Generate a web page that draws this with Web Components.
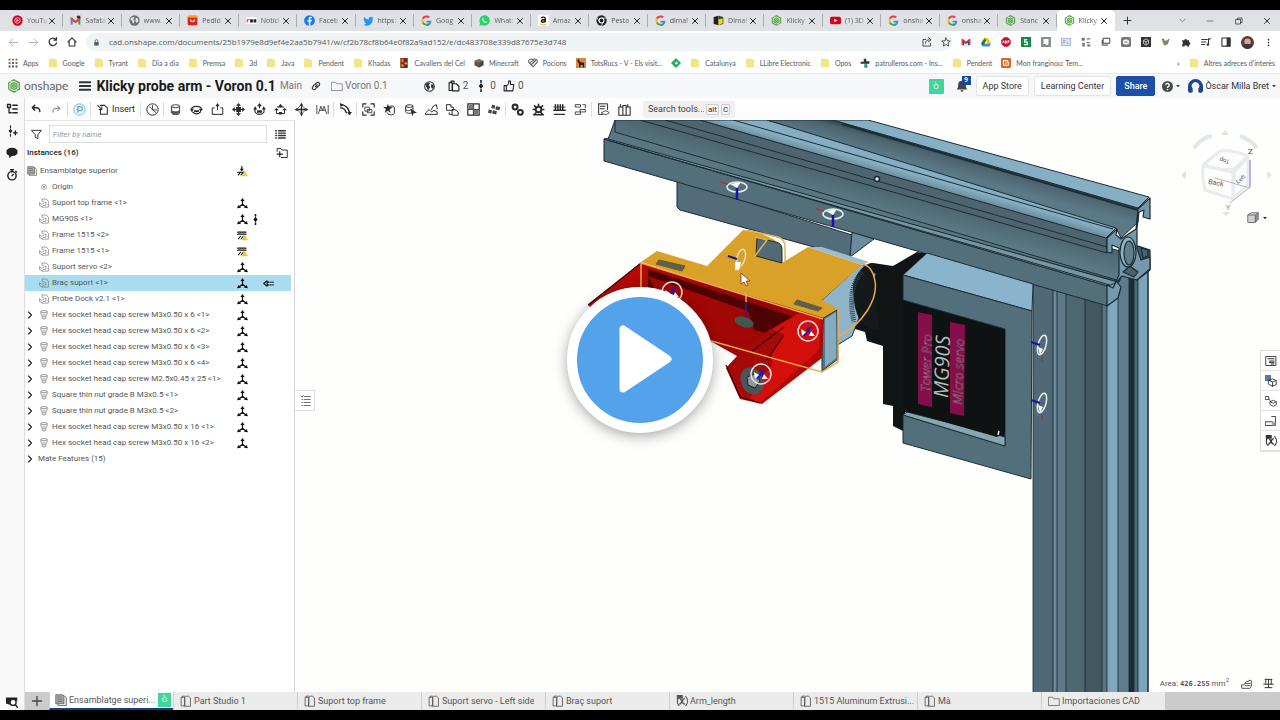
<!DOCTYPE html>
<html lang="ca">
<head>
<meta charset="utf-8">
<title>Klicky probe arm - Voron 0.1</title>
<style>
  * { box-sizing: border-box; }
  html { height: 100%; }
  body {
    margin: 0;
    min-height: 100%;
    padding: 10px 0;
    background: #000;
    position: relative;
    display: flex;
    flex-direction: column;
    font-family: Roboto, "Open Sans", sans-serif;
    font-size: 8px;
    line-height: 12px;
    color: #333;
  }
</style>
</head>
<body>
<browser-chrome></browser-chrome>
<doc-header></doc-header>
<cad-workspace></cad-workspace>
<play-button></play-button>

<script>
/** 16x16 icon bodies. Strokes use currentColor unless they are brand marks. */
const G = '<path fill="#4285f4" d="M15 8.2H8v2.7h4c-.4 1.5-1.900 2.600-4 2.600V16c4 0 7-2.800 7-7.800"/><path fill="#34a853" d="M1.500 11.500A7.500 7.500 0 0 0 12.500 14l-2-1.900a4.600 4.600 0 0 1-6.800-2.300z"/><path fill="#fbbc05" d="M1.500 4.500a8 8 0 0 0 0 7l2.300-1.800a5 5 0 0 1 0-3.500z"/><path fill="#ea4335" d="M1.500 4.500A7.500 7.500 0 0 1 13 2.500l-2 2a4.700 4.700 0 0 0-7.200 1.700z"/>';
const line = (d, w = 1.4) => `<path fill="none" stroke="currentColor" stroke-width="${w}" stroke-linecap="round" stroke-linejoin="round" d="${d}"/>`;
const fill = (d) => `<path fill="currentColor" d="${d}"/>`;
const LOGO = '<g fill="none" stroke="#58a745" stroke-width="1.600"><path d="M5 2.500L8 1l6 3.500v7L11 13.300"/><path d="M2 11.500v-7L4 3.300M2 11.500L8 15l2.500-1.500"/><path d="M8 4.200L11.300 6v4L8 11.800 4.700 10V6z"/><circle cx="8" cy="8" r="1.500"/></g>';

const ICONS = {
  yt: '<circle cx="8" cy="8" r="7.500" fill="#d6001c"/><circle cx="8" cy="8" r="4" fill="none" stroke="#fff"/><path fill="#fff" d="M6.500 5.700v4.600L10.300 8z"/>',
  gmail: '<path fill="#4285f4" d="M1 4h3v10H1z"/><path fill="#34a853" d="M12 4h3v10h-3z"/><path fill="#ea4335" d="M1 3l7 5 7-5v4l-7 5-7-5z"/><path fill="#333" d="M10 1h5v4h-5z"/>',
  web: '<circle cx="8" cy="8" r="7.500" fill="#6b6f73"/><path fill="#dfe1e5" d="M3 4.500l4-2 1 2-2 2 2 2-1 4-2-1V9L2 7zm7-1l3 2 .5 4-2.500 2-2-3z"/>',
  ali: '<rect x="1" y="1" width="14" height="14" rx="2" fill="#d9241b"/><path fill="#ff9f1a" d="M1 3a2 2 0 0 1 2-2h10a2 2 0 0 1 2 2v1H1z"/><path d="M5 6a3 3.500 0 0 0 6 0" fill="none" stroke="#fff" stroke-width="1.500"/>',
  f24: '<rect y="3" width="16" height="10" fill="#fff"/><path fill="#d22" d="M1 6h4v1.500H2.500V11H1z"/><path fill="#222" d="M6 6h4v5H6zM11 6h4v5h-4z"/>',
  fb: '<circle cx="8" cy="8" r="7.800" fill="#1877f2"/><path fill="#fff" d="M7 15.800V9.500H5V7.300h2V5.500C7 3.600 8.200 2.700 9.800 2.700l1.600.1v2h-1.100c-.9 0-1.100.5-1.100 1.100v1.400h2.200l-.4 2.200H9.200v6.300z"/>',
  tw: '<path fill="#1d9bf0" d="M15.500 3.500l-1.600.5a3.200 3.200 0 0 0-5.700 2.500A9 9 0 0 1 1.500 3a3.200 3.200 0 0 0 1 4.400L1 7a3.300 3.300 0 0 0 2.600 3.200l-1.400.1a3.200 3.200 0 0 0 3 2.200A6.500 6.500 0 0 1 .5 14c7 4 13.500-.5 13.500-8z"/>',
  google: G,
  wa: '<path fill="#25d366" d="M8 .5a7.500 7.500 0 1 1-3.700 14L.5 15.500l1.100-3.700A7.500 7.500 0 0 1 8 .5"/><path fill="#fff" d="M5.500 4.300L4.600 6c.4 3 2.600 5 5.600 5.700l1.600-1.200-1.900-1.600-1 .9C7.600 9.300 6.800 8.300 6.400 7.200l.8-.9z"/>',
  amazon: '<rect width="16" height="16" rx="1" fill="#fff"/><path fill="none" stroke="#111" stroke-width="2" d="M5 4.500C6 2.500 10.500 2.500 10.500 5v5.500M10.500 6.500C7 6.500 5 7.200 5 9s4 2.300 5.500-.5"/><path fill="none" stroke="#f90" stroke-width="1.300" d="M3 13c3.500 2 7 2 10 0"/>',
  chrome: '<circle cx="8" cy="8" r="7.500" fill="#222"/><circle cx="8" cy="8" r="3.500" fill="#222" stroke="#fff" stroke-width="1.500"/><path stroke="#fff" d="M8 4.500h7M5 9.500L1.500 4M11 10l-3.500 6"/>',
  dimaf: '<path fill="#222" d="M1 3l7-2v14l-7-2z"/><path fill="#3a4a22" d="M8 1l7 2v10l-7 2z"/><path fill="#e9d91f" d="M8 6l6-1v7l-6 3z"/>',
  onshape: LOGO,
  ytr: '<rect y="2.500" width="16" height="11" rx="2.500" fill="#d6001c"/><path fill="#fff" d="M6.300 5.500v5L10.800 8z"/>',
  close: line('M3 3l10 10M13 3L3 13', 2),
  plus: line('M8 2v12M2 8h12', 1.800),
  min: line('M2 8h12', 1.200),
  restore: line('M2 5h9v9H2zM5 5V2h9v9h-3', 1.500),
  chevd: line('M2 5l6 6 6-6', 1.200),
  back: line('M14 8H2M7 3L2 8l5 5', 1.300),
  fwd: line('M2 8h12M9 3l5 5-5 5', 1.300),
  reload: line('M13.500 9.500A6 6 0 1 1 12.500 4M13.500 1v4h-4', 2),
  home: line('M1.500 8L8 1.500 14.500 8M3.500 7v7.500h9V7', 1.700),
  lock: fill('M3 7h10v8H3z') + line('M5 7V4.500a3 3 0 0 1 6 0V7', 1.800),
  share: line('M6 4H1.500v10.500h12V10M5.500 10c0-4 3-5.500 6-5.500M10 1l4.500 3.500L10 8'),
  star: line('M8 1.500l2 4.500 4.800.4-3.600 3.200 1.100 4.900L8 12l-4.300 2.500 1.100-4.900L1.200 6.400 6 6z', 1.300),
  drive: '<path fill="#188038" d="M5.500 1.500h5L5 11.500 2.500 15 0 10.500z"/><path fill="#fbbc04" d="M5.500 1.500h5l5.500 9h-5z"/><path fill="#4285f4" d="M2.500 15L5 10.500h11L13.500 15z"/>',
  mailr: '<path fill="#fff" d="M1 3h14v10H1z"/><path fill="#1f3f9c" d="M3 6l5 4 5-4v7H3z"/><path fill="#fff" d="M5 9l3 2 3-2v4H5z"/><path fill="#d93025" d="M1 3h2v10H1zM13 3h2v10h-2zM1 3h2l5 4 5-4h2v2L8 10.500 1 5z"/>',
  abp: '<path fill="#c70d2c" d="M5 .5h6L15.500 5v6L11 15.500H5L.5 11V5z"/><path stroke="#fff" stroke-width="1.300" fill="none" d="M2.500 10l1.500-4 1.500 4M7 10V6h1.500v4zM11 10.500V6h2v2h-2"/>',
  green: '<rect width="16" height="16" fill="#128a4d"/><path stroke="#fff" stroke-width="2" fill="none" d="M10 4H6v4h4v4H5"/>',
  greysq: '<rect width="16" height="16" rx="1" fill="#8a8d91"/><path fill="#fff" d="M4 3h8v8l-3 2-2-2H4z"/>',
  card: '<rect x=".5" y="2" width="15" height="12" fill="#dbe4f2" stroke="#8da2c0"/><path stroke="#4d6ea5" d="M3 6h4M3 9h3M9 9l3 2"/>',
  puzz: '<g fill="#777"><path d="M1 1h5v5H1zM9 2h6v2H9zM2 9h4v6H2zM9 8h5v2H9zM10 12h5v3h-5z"/></g>',
  cards: line('M4 2h10v8H4zM2 5v8h9', 1.500),
  dots: '<rect width="16" height="16" rx="3" fill="#777"/><rect x="3" y="4" width="10" height="8" rx="4" fill="#fff"/><path stroke="#777" stroke-width="1.500" d="M5 8h6"/>',
  unity: '<rect width="16" height="16" fill="#333"/><path fill="none" stroke="#ddd" stroke-width="1.300" d="M8 3l4 2.500v5L8 13l-4-2.500v-5zM8 8v5M8 8L4 5.500M8 8l4-2.500"/>',
  bird: '<path fill="#7a8a62" d="M2 4l6 2 6-4-3 9-5 3-3-4z"/><path fill="#b23" d="M2 3h3v2H2z"/>',
  ext: fill('M2 5h3.500a2 2 0 1 1 4 0H13v3.500a2 2 0 1 1 0 4V15H9.500a2 2 0 0 0-4 0H2v-3.500a2 2 0 0 0 0-3.500z'),
  music: line('M1 4h9M1 8h7M1 12h5M12 12V3h3', 1.700) + '<circle cx="11" cy="12" r="2" fill="currentColor"/>',
  side: line('M1.500 1.500h13v13h-13z', 1.800) + fill('M9 1h6v14H9z'),
  photo: '<circle cx="8" cy="8" r="8" fill="#5c3a33"/><circle cx="8" cy="7" r="4" fill="#d8a796"/><path fill="#2f3a42" d="M2 13a7 7 0 0 1 12 0 8 8 0 0 1-12 0"/>',
  more: '<g fill="currentColor"><circle cx="8" cy="3" r="1.500"/><circle cx="8" cy="8" r="1.500"/><circle cx="8" cy="13" r="1.500"/></g>',
  apps: '<g fill="#c4473a"><path d="M1 1h3v3H1zM6.500 1h3v3h-3zM12 1h3v3h-3z"/></g><g fill="#5a7a3a"><path d="M1 6.500h3v3H1zM12 6.500h3v3h-3z"/></g><g fill="#555"><path d="M6.500 6.500h3v3h-3zM1 12h3v3H1zM6.500 12h3v3h-3zM12 12h3v3h-3z"/></g>',
  fold: '<path fill="#f3e684" stroke="#e3d36a" stroke-width=".6" d="M2 2.500a1 1 0 0 1 1-1h7l3 2h1v10a1 1 0 0 1-1 1H3a1 1 0 0 1-1-1z"/>',
  castle: '<rect x="2" width="12" height="16" fill="#8a2b1d"/><path fill="#e5a32d" d="M4 2h3v4H4zM9 7h4v3H9zM4 10h3v4H4z"/><path fill="#29452b" d="M9 1h4v4H9zM10 12h3v3h-3z"/>',
  mc: '<path fill="#6b7c64" d="M8 1l7 3.500v7L8 15l-7-3.500v-7z"/><path fill="#7a4f43" d="M1 4.500L8 8v7l-7-3.500z"/><path fill="#3d4a52" d="M15 4.500L8 8v7l7-3.500z"/>',
  heart: line('M8 14L1.500 7A3.700 3.700 0 0 1 8 3.500 3.700 3.700 0 0 1 14.500 7zM4 7l5-3.500M6 10l6-6', 1.700),
  donkey: '<rect width="16" height="16" fill="#d98a3d"/><path fill="#2a1c12" d="M2 3l2-2 1 3 3 3h5v8h-2v-4H7v4H5V9L3 6z"/>',
  diam: '<path fill="#1fae5a" d="M8 0l8 8-8 8-8-8z"/><path fill="#fff" d="M6 8l3-3v2h2v2H9v2z"/>',
  pat: '<path fill="#333" d="M6 1h4v4h5v4h-4l1 6H7l1-6H1V6h5z"/><path fill="#3aa" d="M7 9h4v5H7z"/>',
  blog: '<rect width="16" height="16" rx="2" fill="#d9651f"/><path fill="none" stroke="#fff" stroke-width="1.800" d="M4 4h5a2 2 0 0 1 2 2v1.500h1v2.500a2 2 0 0 1-2 2H6a2 2 0 0 1-2-2zM6.500 6.500h2M6.500 9.500h3"/>',
  menu: line('M1 3h14M1 8h14M1 13h14', 2.600),
  link: line('M7 9l3-3M6 6L9 3a2.800 2.800 0 0 1 4 4l-3 3M10 9l-3 4a2.800 2.800 0 0 1-4-4l2-3', 1.800),
  folder: line('M1 3h5l1.500 2H15v9H1z', 1),
  globe: '<circle cx="8" cy="8" r="7" fill="#fff" stroke="#333" stroke-width="1.500"/><path fill="#333" d="M2 5l4-3 3 1-2 3 2 3-2 3-1 2-2-4zM11 4l3 2 .5 3-2.500 2.500L10 8z"/>',
  copy: line('M1.500 3.500h4V14h-4zM4 3.500V1.500h4v2M6 5h5l3.500 3v6.500H6z', 1.500),
  branch: line('M8 0v3M8 13v3', 2.200) + fill('M8 4l3 4-3 4-3-4z'),
  thumb: line('M1.500 7.500h3v7h-3zM4.500 8l3-3V1.500h2.500V6h4.500l-1.500 8.500H4.500z'),
  bell: fill('M8 1a5 5 0 0 1 5 5c0 4 1 5 2 6.500H1C2 11 3 10 3 6a5 5 0 0 1 5-5M6 13.500h4a2 2 0 0 1-4 0'),
  help: '<circle cx="8" cy="8" r="8" fill="#4a4a4a"/><path fill="none" stroke="#fff" stroke-width="2" d="M5.500 6a2.500 2.500 0 1 1 3.500 2.200c-.8.400-1 .8-1 1.800M8 11.500v2"/>',
  caret: fill('M3 5.500h10L8 11z'),
  user: '<path fill="#1c4692" d="M8 0a8 8 0 0 1 8 8v5l-2 2-3-1V10a4 4 0 1 0-6 0v4l-3 1-2-2V8a8 8 0 0 1 8-8"/>',
  tree: line('M2 2h4v4H2zM4 6v7h3M9 3h6M9 8h6M9 13h6', 1.700),
  undo: line('M6 2L2 6l4 4M2 6h7a5 5 0 0 1 5 6', 2.300),
  redo: line('M10 2l4 4-4 4M14 6H7a5 5 0 0 0-5 6', 2.300),
  history: '<circle cx="8" cy="8" r="7" fill="#e3f1f8" stroke="#8cb9cf" stroke-width="1.200"/><path fill="none" stroke="#76a9c3" stroke-width="1.500" d="M6 12V4.500h3a2.300 2.300 0 0 1 0 5H6M4 8h3"/>',
  insert: line('M5 2h6l4 3.500V15H5V9M1 2l6 6M7 4v4H3', 1.500),
  clock: '<circle cx="8" cy="8" r="7" fill="#fff" stroke="currentColor" stroke-width="1.200"/>' + line('M8 3v5.500h5M5 5l3 3.500 4 3', 1),
  cyl: line('M3 4c0-2.500 10-2.500 10 0v8c0 3-10 3-10 0zM3 4c0 2.500 10 2.500 10 0', 1.100) + '<path fill="#555" d="M3 8c0 3 10 3 10 0v4c0 3-10 3-10 0z"/>',
  rot: line('M2 8c0-5 12-5 12 0M3 11c3 3 7 3 10 0', 1.500) + fill('M0 7h5l-3 4zM11 7h5l-3 4zM5 9h6v2H5z'),
  slide: line('M4 6H1.500v8H4M12 6h2.500v8H12M4 14h8M8 8V3', 1.200) + fill('M5.500 4L8 0l2.500 4z'),
  cross: line('M8 2v12M2 8h12', 1.500) + fill('M8 0l3 3.500H5zM8 16l3-3.500H5zM0 8l3.500-3v6zM16 8l-3.500-3v6zM5 5h6v6H5z'),
  ball: line('M3 7c-2 4 1 7 5 7s7-3 5-7M8 6V2', 1.400) + fill('M5 4l3-4 3 4zM0 8l3-4 2 4zM16 8l-3-4-2 4zM5 9h6v3H5z'),
  slot: line('M3 9v4h3M13 9v4h-3M4 5h8', 1.200) + fill('M5 5l3-4 3 4zM0 9l3-3 3 3zM16 9l-3-3-3 3zM6 11h4v3H6z'),
  move4: line('M8 1v14M1 8h14', 1.600) + line('M8 2.500L13.500 8 8 13.500 2.500 8z', .9) + fill('M8 0l2 3H6zM8 16l2-3H6zM0 8l3-2v4zM16 8l-3-2v4z'),
  tang: line('M1 3v10M15 3v10M3 13l3-9 2 5 2-5 3 9M5 9h6', 1),
  path: line('M2 2c5 0 11 4 11 12M2 6c4 0 6 3 7 6', 1.700) + fill('M1 0l5 2-4 3zM10 11h6l-3 4z'),
  group: line('M1 5V1h4M11 1h4v4M15 11v4h-4M5 15H1v-4', 1.400) + line('M4 5h5v5H4zM7 8h5v4H7z', 1),
  starc: line('M6 5c3-2 8-2 8 1v6c0 3-8 4-9 0', 1.200) + fill('M6 1l1.500 4H12L8 8l1.500 4.500L6 9.500 2 12l1.500-4.500L0 5h4.500z'),
  sel: line('M2 4c0-2.500 9-2.500 9 0v7c-2 2.500-9 2-9 0zM2 4c0 2 9 2 9 0M2 8c0 2 7 2 7 0', 1.200) + fill('M8 7l8 5-4 .5L10 16z'),
  hill: line('M1 14h14v-3l-4-2-3 2-3-3-4 4zM8 8l2-4 4-2 1 5', 1.200),
  twop: line('M1 2h5v3h3v4H1zM8 8h3l4 3v4H8zM4 12v2h3', 1.200),
  chess: line('M1 1h14v14H1zM8 1v14M1 8h14', 1.500) + '<path fill="#777" d="M2 2h6v6H2zM8 8h6v6H8z"/>',
  tiles: '<g fill="#444"><path d="M5 2l4 1-1 4-4-1zM10 4l5 1-1 4-5-1zM1 8l4 1-1 4-4-1zM6 9l5 1-1 4-5-1z"/></g>',
  gears: '<g fill="none" stroke="currentColor" stroke-width="2.500"><circle cx="5" cy="5" r="3"/><circle cx="11.500" cy="11.500" r="3"/></g>',
  gear: line('M2 14.500h12M5 12l-2 2M11 12l2 2M8 1.500v2M3 3.500l1.500 1.500M13 3.500L11.500 5M1.500 8h2M12.500 8h2', 2) + '<circle cx="8" cy="8" r="3.500" fill="none" stroke="currentColor" stroke-width="2.400"/>',
  rack: line('M1 9h14M2 14h12M3 2v7M6 2v7M9 2v7M12 2v7', 1.800) + line('M1 5h14', 1),
  flow: line('M2 2h6v3H2zM8 8h6v3H8zM2 11h6v3H2zM11 2h3v4', 1),
  eye: line('M2 1h11v7M2 1v13h5M4 4h6M4 7h5', 1.200) + line('M6 12c3-3 6-3 9 0-3 3-6 3-9 0z', 1.100),
  bag: line('M1 5h5v10H1zM6 3h4v12H6zM10 5h5v10h-5zM3 5V2M12 5V2', 1.300),
  addb: line('M6 1v3M6 12v3', 1.500) + fill('M6 5l2.500 3L6 11 3.500 8z') + line('M12.500 8v5M10 10.500h5', 1.800),
  chat: fill('M8 1c5 0 7.500 2.500 7.500 5.500S13 12 8 12l-4 3 .5-3.500C1.500 10.500.5 8.500.5 6.500.5 3.500 3 1 8 1'),
  watch: '<circle cx="8" cy="9" r="5.500" fill="#fff" stroke="currentColor" stroke-width="1.900"/>' + line('M6 1h4M8 1v3M8 9l2-2M13 3l1 1', 1.700),
  find: fill('M0 2h15v5L10 4 5 8l1 4-6-2z') + '<circle cx="9.500" cy="8.500" r="4" fill="#fff" stroke="currentColor" stroke-width="1.700"/>' + line('M12.500 11.500l3 4', 2),
  funnel: line('M1 2h14L10 8.500V14l-4-2V8.500z', 1.400),
  list: line('M5 2.500h10M5 6h10M5 9.500h10M5 13h10M1 2.500h1M1 6h1M1 9.500h1M1 13h1', 2),
  addf: line('M1.500 6V2h5l1.500 2h7v10H7', 1.200) + line('M5 6v7M1.500 9.500h7', 1.500),
  asm: line('M4 13v2.500h11V5l-3-3h-2', 1.200) + '<path fill="#aaa" stroke="#555" d="M1 1h9l2 2v10H1z"/><path stroke="#666" fill="none" d="M3 4h6M3 7h7M3 10h7"/>',
  dot: '<circle cx="8" cy="8" r="4" fill="none" stroke="#888" stroke-width="1.200"/><circle cx="8" cy="8" r="1.500" fill="#777"/>',
  part: line('M5 6V1.500h6L15 5v9.500H5M1 8v4l3 2 3-2M1 8l3 2 3-1M7 6l4 1v4l-3 1', 1),
  screw: line('M3 3c0-3 10-3 10 0v3c0 2-1 2-2 3v4c-1 2-5 2-6 0V9C4 8 3 8 3 6zM3 3c0 2 10 2 10 0M6 8h4M6 11h4', 1.100),
  tri: line('M8 3v6M8 9l-5 4M8 9l5 4', 1.800) + fill('M5 4.500L8 0l3 4.500zM0 15l2-5 4 4zM16 15l-2-5-4 4z'),
  fix: line('M1 3h12M1 6h12', 2) + line('M2 13l3-4M6 13l3-4', 1.500) + '<path fill="#edc93c" d="M11 7l5 8H6z"/>',
  fixd: line('M7 0v5M1 9h10M2 13l3-4M6 13l3-4', 1.600) + fill('M4 4h6L7 8z') + '<path fill="#edc93c" d="M11 7l5 8H6z"/>',
  arrow: line('M6 4L1 8l5 4zM7 6h2M11 6h1M14 6h1M7 10h2M11 10h1M14 10h1', 1.500),
  chevr: line('M5 2l6 6-6 6', 2.200),
  tab: line('M6 3H1.500v11.500H6zM3 3V1.500h3M6 14.500V3.500L8 1.500h3L14 4v10.500z', 1.100),
  varx: line('M4 3C1 6 1 11 4 14M13 2c3 4 3 9 0 12', 1.500) + line('M6 6c3 0 2 6 5 6M11 5c-2 0-4 7-6 7', 1.900) + fill('M1 0h8v5H1z'),
  sheet: line('M1.500 2h13v12h-13z', 1.200) + line('M4 5h8M6 8h6M6 10h6M8 12h4', 1.400),
  cubes: '<path fill="#5479a8" d="M0 0h8v8H0z"/>' + line('M5 7l5-2 5 2.500v5L10 15l-5-2.500zM5 7l5 2.500L15 7M10 9.500V15', 1.200),
  links: line('M1 2h4v4H1zM5 5l3 4M7 9l4-2 4 2v4l-4 2-4-2zM7 9l4 2 4-2', 1.100),
  plate: line('M1 9h9v5H1zM9 2h5v12h-4', 1.200) + '<path fill="#8ea4b8" d="M9 9h5v5H9z"/>',
  hand: line('M1 10h3l4-5h3l1-2 3 1v8l-2 3H2zM6 8h7M6 11h7', 1.200),
  scale: line('M3 2h10M4 2v7M12 2v7M1 9h6M9 9h6M8 2v12M3 14h10', 1.400),
  cube: '<path fill="#d0d0d0" stroke="#555" d="M1 4l5-3h9v9l-4 4H1z"/><path fill="#8b8b8b" d="M11 5l4-4v9l-4 4z"/><path fill="none" stroke="#555" d="M1 4h10v10M11 4l4-3"/>',
  outline: line('M2 1l2 2 2-3M7 2h8M7 6h8M7 10h8M7 14h8M4 6h1M4 10h1M4 14h1', 1),
};

/** Registers an element whose shadow root is cloned from one template. */
function define(tag, css, html, connected) {
  const tpl = document.createElement('template');
  tpl.innerHTML = `<style>*{box-sizing:border-box}button,input{font:inherit;color:inherit;border:0;background:none;padding:0;margin:0}a{color:inherit;text-decoration:none}${css}</style>${html}`;
  customElements.define(tag, class extends HTMLElement {
    constructor() {
      super();
      this.attachShadow({ mode: 'open' }).append(tpl.content.cloneNode(true));
    }
    connectedCallback() {
      if (connected) connected.call(this, this.shadowRoot);
    }
  });
}

define('x-icon', `
  :host { display: inline-flex; flex: none; width: var(--size, 11px); height: var(--size, 11px); }
  svg { width: 100%; height: 100%; display: block; }
`, '<svg viewBox="0 0 16 16" aria-hidden="true"></svg>', function (root) {
  root.querySelector('svg').innerHTML = ICONS[this.getAttribute('name')] || '';
});

const icon = (n, size) => `<x-icon name="${n}"${size ? ` style="--size:${size}px"` : ''}></x-icon>`;
const iconBtn = (n, label, size) => `<button aria-label="${label}">${icon(n, size)}</button>`;

// ── Browser ──────────────────────────────────────────────────────────────

define('browser-tab', `
  :host { display: flex; flex: 1 1 0; min-width: 0; align-items: center; padding: 0 6px 0 7px; border-right: 1px solid #a9acb0; height: 13px; color: #55585c; }
  :host([active]) { background: #fff; border-color: transparent; border-radius: 5px 5px 0 0; height: 21px; }
  span { flex: 1; overflow: hidden; white-space: nowrap; margin-left: 4px; mask-image: linear-gradient(90deg, #000 70%, transparent); }
  button { display: flex; color: #222; }
`, `<x-icon></x-icon><span><slot></slot></span><button aria-label="Tanca">${icon('close', 8)}</button>`, function (root) {
  root.querySelector('x-icon').setAttribute('name', this.getAttribute('icon'));
  root.querySelector('x-icon').connectedCallback();
});

define('bookmark-item', `
  :host { display: flex; flex: none; }
  a { display: flex; align-items: center; gap: 5px; white-space: nowrap; }
  x-icon { --size: 10px; }
`, '<a href="#"><x-icon></x-icon><slot></slot></a>', function (root) {
  root.querySelector('x-icon').setAttribute('name', this.getAttribute('icon'));
  root.querySelector('x-icon').connectedCallback();
});

const TABS = [
  ['yt', 'YouTu'], ['gmail', 'Safata'], ['web', 'www.'], ['ali', 'Pedid'], ['f24', 'Notíci'], ['fb', 'Faceb'],
  ['tw', 'https:'], ['google', 'Goog'], ['wa', 'What:'], ['amazon', 'Amaz'], ['chrome', 'Pesta'],
  ['google', 'dimaf'], ['dimaf', 'Dimaf'], ['onshape', 'Klicky'], ['ytr', '(1) 3D'], ['google', 'onsha'],
  ['google', 'onsha'], ['onshape', 'Stanc'], ['onshape', 'Klicky'],
];
const MARKS = [
  ['apps', 'Apps'], ['fold', 'Google'], ['fold', 'Tyrant'], ['fold', 'Dia a dia'], ['fold', 'Premsa'], ['fold', '3d'],
  ['fold', 'Java'], ['fold', 'Pendent'], ['fold', 'Khadas'], ['castle', 'Cavallers del Cel'], ['mc', 'Minecraft'],
  ['heart', 'Pocions'], ['donkey', 'TotsRucs - V - Els visit...'], ['diam', ''], ['fold', 'Catalunya'],
  ['fold', 'LLibre Electronic'], ['fold', 'Opos'], ['pat', 'patrulleros.com - Ins...'], ['fold', 'Pendent'],
  ['blog', 'Mon franginou: Tem...'],
];
const EXTS = ['mailr', 'drive', 'abp', 'green', 'greysq', 'card', 'puzz', 'cards', 'dots', 'unity', 'bird', 'ext', 'music', 'side'];

define('browser-chrome', `
  :host { display: block; background: #fff; color: #55585c; font-family: Lato, "Open Sans", sans-serif; font-size: 7px; }
  .strip { display: flex; align-items: center; height: 21px; background: #dfe1e5; padding-left: 5px; }
  .tabs { display: flex; flex: 1; height: 21px; align-items: center; min-width: 0; font-family: "Open Sans", sans-serif; }
  .win { flex: none; width: 165px; display: flex; align-items: center; justify-content: space-between; padding: 0 9px 0 8px; color: #333; }
  .win button { display: flex; }
  .win .first { margin-right: 26px; }
  .addr { display: flex; align-items: center; height: 22px; padding: 0 7px 0 8px; gap: 9px; }
  .addr button { display: flex; color: #333; }
  .addr .off { color: #aaa; }
  .pill { flex: 1; display: flex; align-items: center; gap: 9px; background: #f0f3f3; border-radius: 9px; height: 18px; padding: 0 1px 0 7px; }
  .pill input { flex: 1; min-width: 0; font-family: "Open Sans", sans-serif; font-size: 8px; color: #555a5e; outline: 0; }
  .ext { display: flex; gap: 10px; align-items: center; }
  .marks { display: flex; align-items: center; height: 20px; padding: 0 5px 0 8px; gap: 9px; }
  .marks .gap { flex: 1; }
`, `
  <div class="strip">
    <nav class="tabs">${TABS.map(([i, t], n) => `<browser-tab icon="${i}"${n === TABS.length - 1 ? ' active' : ''}>${t}</browser-tab>`).join('')}</nav>
    <div class="win"><span class="first">${iconBtn('plus', 'Pestanya nova', 9)}</span>${iconBtn('chevd', 'Cerca pestanyes', 7)}${iconBtn('min', 'Minimitza', 8)}${iconBtn('restore', 'Restaura', 8)}${iconBtn('close', 'Tanca', 8)}</div>
  </div>
  <div class="addr">
    <button class="off" aria-label="Enrere">${icon('back', 11)}</button><button class="off" aria-label="Endavant">${icon('fwd', 11)}</button>
    ${iconBtn('reload', 'Torna a carregar', 10)}${iconBtn('home', 'Inici', 10)}
    <div class="pill">${icon('lock', 7)}<input aria-label="Adreça" value="cad.onshape.com/documents/25b1979e8d9ef4e2aa5b7941/w/cf2b78cf8b64e0f82a9ad152/e/dc483708e339d87675e3d748">${iconBtn('share', 'Comparteix', 10)}${iconBtn('star', 'Adreça d’interès', 10)}</div>
    <div class="ext">${EXTS.map((n) => iconBtn(n, n, 10)).join('')}${icon('photo', 13)}${iconBtn('more', 'Menú', 9)}</div>
  </div>
  <nav class="marks">${MARKS.map(([i, t]) => `<bookmark-item icon="${i}">${t}</bookmark-item>`).join('')}
    <span class="gap"></span><span>»</span><bookmark-item icon="fold">Altres adreces d'interès</bookmark-item></nav>
`);

// ── Document header ──────────────────────────────────────────────────────

define('doc-header', `
  :host { display: flex; align-items: center; height: 25px; background: #f6f7f8; border-top: 1px solid #e8e8e8; padding: 0 3px 0 7px; color: #333; font-size: 9px; white-space: nowrap; }
  .brand { display: flex; align-items: center; gap: 3px; font-family: Lato, sans-serif; font-size: 12px; color: #666; }
  h1 { font-size: 14px; margin: 0 4px 0 5px; color: #1a1a1a; line-height: 20px; }
  .menu { margin-left: 11px; display: flex; }
  .grey { color: #777; font-size: 10px; }
  .link { margin: 0 10px 0 9px; display: flex; }
  .path { display: flex; align-items: center; gap: 2px; color: #777; font-size: 10px; }
  .stats { display: flex; align-items: center; gap: 3px; margin-left: 36px; font-size: 10px; color: #555; }
  .stats x-icon { color: #222; }
  .stats x-icon:not(:first-child) { margin-left: 4px; }
  .stats x-icon:nth-of-type(2) { margin-left: 10px; }
  .right { margin-left: auto; display: flex; align-items: center; gap: 5px; }
  .badge { width: 15px; height: 15px; background: #41d69a; color: #fff; text-align: center; line-height: 15px; border-radius: 1px; margin-right: 7px; font-size: 8px; }
  .bell { position: relative; display: flex; color: #444; padding-right: 3px; }
  .bell b { position: absolute; right: 0; top: -4px; width: 9px; height: 9px; background: #1c4692; color: #fff; font-size: 7px; line-height: 9px; text-align: center; }
  .btn { height: 20px; padding: 0 6px; border: 1px solid #e2e3e4; border-radius: 2px; background: #fff; }
  .share { background: #1b4fa8; border-color: #1b4fa8; color: #fff; font-weight: 500; padding: 0 7px; }
  .help, .me { display: flex; align-items: center; gap: 2px; margin-left: 2px; }
`, `
  <a class="brand" href="#">${icon('onshape', 14)}<span>onshape</span></a>
  <button class="menu" aria-label="Menu">${icon('menu', 12)}</button>
  <h1>Klicky probe arm - Voron 0.1</h1><span class="grey">Main</span>
  <button class="link" aria-label="Link">${icon('link', 10)}</button>
  <a class="path" href="#">${icon('folder', 12)}Voron 0.1</a>
  <div class="stats">${icon('globe', 11)}${icon('copy', 12)}<span>2</span>${icon('branch', 12)}<span>0</span>${icon('thumb', 12)}<span>0</span></div>
  <div class="right">
    <span class="badge">Ò</span>
    <button class="bell" aria-label="Notifications">${icon('bell', 12)}<b>9</b></button>
    <button class="btn">App Store</button><button class="btn">Learning Center</button><button class="btn share">Share</button>
    <button class="help" aria-label="Help">${icon('help', 11)}${icon('caret', 6)}</button>
    <button class="me">${icon('user', 15)}Òscar Milla Bret${icon('caret', 6)}</button>
  </div>
`);

// ── Toolbar ──────────────────────────────────────────────────────────────

const TOOLS = [
  ['clock'], ['cyl', 'rot', 'slide', 'cross', 'ball', 'slot', 'move4', 'tang'], ['path'],
  ['group', 'starc', 'sel', 'hill', 'twop', 'chess', 'tiles'], ['gears', 'gear', 'rack', 'flow'], ['eye', 'bag'],
];

define('tool-bar', `
  :host { display: flex; align-items: center; height: 22px; background: #fdfdfd; font-size: 9px; }
  button { display: flex; align-items: center; justify-content: center; height: 20px; width: 21px; color: #2b2b2b; }
  .off { color: #999; }
  i { width: 1px; height: 15px; background: #ddd; margin: 0 1px 0 0; }
  .insert { width: 48px; gap: 4px; }
  .search { display: flex; align-items: center; gap: 2px; height: 17px; background: #f0f0f0; border-radius: 2px; padding: 0 5px; margin-left: 8px; }
  .search input { width: 56px; outline: 0; }
  .search input::placeholder { color: #444; opacity: 1; }
  kbd { font: inherit; font-size: 8px; line-height: 9px; border: 1px solid #ccc; border-radius: 2px; padding: 0 1px; background: #f7f7f7; }
`, `
  ${iconBtn('undo', 'Undo', 10)}<button class="off" aria-label="Redo">${icon('redo', 9)}</button><i></i>
  ${iconBtn('history', 'Update', 13)}<i></i><button class="insert">${icon('insert', 11)}Insert</button>
  ${TOOLS.map((g) => '<i></i>' + g.map((n) => iconBtn(n, n, 13)).join('')).join('')}
  <label class="search"><input aria-label="Search tools" placeholder="Search tools..."><kbd>alt</kbd><kbd>C</kbd></label>
`);

// ── Instance tree ────────────────────────────────────────────────────────

define('tree-row', `
  :host { display: flex; align-items: center; height: 16px; padding-left: 1px; margin-right: 3px; }
  :host([selected]) { background: #aadcf0; }
  .exp { width: 8px; height: 8px; color: #222; flex: none; display: flex; }
  .kind { margin: 0 3px 0 5px; --size: 10px; color: #666; display: flex; }
  .name { flex: 1; white-space: nowrap; }
  .mate { flex: none; width: 54px; display: flex; gap: 2px; color: #111; --size: 11px; }
  :host([root]) .exp, :host([kind=""]) .kind { display: none; }
  :host([root]) .kind { margin-left: 1px; }
  :host([kind=""]) .name { margin-left: 4px; }
`, '<span class="exp"></span><span class="kind"></span><span class="name"><slot></slot></span><span class="mate"></span>', function (root) {
  const kind = this.getAttribute('kind');
  if (this.hasAttribute('exp')) root.querySelector('.exp').innerHTML = icon('chevr', 8);
  if (kind) root.querySelector('.kind').innerHTML = icon(kind);
  root.querySelector('.mate').innerHTML = (this.getAttribute('mate') || '').split(' ').filter(Boolean)
    .map((n) => icon(n)).join('');
});

const ROWS = [
  ['asm', 'fixd', 'Ensamblatge superior', 'root'], ['dot', '', 'Origin'], ['part', 'tri', 'Suport top frame <1>'],
  ['part', 'tri branch', 'MG90S <1>'], ['part', 'fix', 'Frame 1515 <2>'], ['part', 'fix', 'Frame 1515 <1>'],
  ['part', 'tri', 'Suport servo <2>'], ['part', 'tri none arrow', 'Braç suport <1>', 'selected'],
  ['part', 'tri', 'Probe Dock v2.1 <1>'],
  ...[1, 2, 3, 4].map((n) => ['screw', 'tri', `Hex socket head cap screw M3x0.50 x 6 <${n}>`, 'exp']),
  ['screw', 'tri', 'Hex socket head cap screw M2.5x0.45 x 25 <1>', 'exp'],
  ['screw', 'tri', 'Square thin nut grade B M3x0.5 <1>', 'exp'],
  ['screw', 'tri', 'Square thin nut grade B M3x0.5 <2>', 'exp'],
  ['screw', 'tri', 'Hex socket head cap screw M3x0.50 x 16 <1>', 'exp'],
  ['screw', 'tri', 'Hex socket head cap screw M3x0.50 x 16 <2>', 'exp'],
  ['', '', 'Mate Features (15)', 'exp'],
];
const esc = (s) => s.replace(/</g, '&lt;').replace(/>/g, '&gt;');

define('instance-panel', `
  :host { display: block; width: 270px; flex: none; background: #fff; border-right: 1px solid #d5d5d5; border-top: 1px solid #e4e4e4; color: #555; }
  .filter { display: flex; align-items: center; gap: 7px; padding: 4px 8px 0 6px; color: #333; }
  .filter input { flex: 1; height: 18px; border: 1px solid #ddd; padding: 0 3px; font-style: italic; min-width: 0; }
  .filter input::placeholder { color: #999; opacity: 1; }
  .filter x-icon:last-child { margin-left: 1px; }
  .head { display: flex; justify-content: space-between; align-items: center; height: 20px; padding: 0 6px 0 2px; color: #222; }
  h2 { font-size: 8px; font-weight: 500; margin: 0; }
`, `
  <div class="filter">${icon('funnel', 11)}<input aria-label="Filter by name" placeholder="Filter by name">${icon('list', 11)}</div>
  <div class="head"><h2>Instances (16)</h2>${icon('addf', 12)}</div>
  ${ROWS.map(([k, m, t, f]) => `<tree-row kind="${k}" mate="${m}" ${f || ''}>${esc(t)}</tree-row>`).join('')}
`);

// ── Model view ───────────────────────────────────────────────────────────

// Vertical extrusion: [x, width, colour]
const POST = [
  [1033, 20, '#4f6976'], [1053, 4, '#6b8897'], [1057, 9, '#5d7987'], [1066, 19, '#4e6672'], [1085, 17, '#42575f'],
  [1102, 5, '#587380'], [1107, 11, '#7fa8be'], [1118, 11, '#5e7c8b'], [1129, 5, '#1a2c34'], [1134, 4, '#4d6875'], [1138, 10, '#7ca4ba'],
];

const mate = (x, y) => `<g transform="translate(${x} ${y})"><ellipse rx="10" ry="5" fill="none" stroke="#e8eef0" stroke-width="1.500"/><path fill="#fff" d="M-7-3L4-5 0 1z"/><path stroke="#1414a8" stroke-width="2.500" d="M0 1v12"/><path stroke="#a33844" stroke-width="1.500" d="M-17-5l8 2"/></g>`;
const bolt = (x, y) => `<g transform="translate(${x} ${y})"><circle r="10" fill="none" stroke="#f0dede" stroke-width="1.500"/><path stroke="#2018c0" stroke-width="2" d="M-4 5L3-4M-1-3l5 7"/><path fill="#fff" d="M-7-2l5 3-4 4zM1 5h6L3 0z"/></g>`;

const MODEL = `
<svg viewBox="295 120 985 572" preserveAspectRatio="xMaxYMin slice" role="img" aria-label="Model">
  <defs>
    <linearGradient id="round" gradientUnits="userSpaceOnUse" x1="870" y1="148" x2="862" y2="176"><stop offset="0" stop-color="#87b0c5"/><stop offset=".45" stop-color="#86adc1"/><stop offset="1" stop-color="#536f7c"/></linearGradient>
    <linearGradient id="groove" gradientUnits="userSpaceOnUse" x1="870" y1="128" x2="864" y2="150"><stop offset="0" stop-color="#263941"/><stop offset=".35" stop-color="#4b646f"/><stop offset="1" stop-color="#5c7987"/></linearGradient>
    <linearGradient id="lip" gradientUnits="userSpaceOnUse" x1="860" y1="184" x2="854" y2="206"><stop offset="0" stop-color="#4e6773"/><stop offset="1" stop-color="#5d7a88"/></linearGradient>
    <linearGradient id="red" x1="0" y1="0" x2="1" y2="1"><stop offset="0" stop-color="#c80b08"/><stop offset=".45" stop-color="#8f0504"/><stop offset="1" stop-color="#c10907"/></linearGradient>
  </defs>
  <g>${POST.map(([x, w, c]) => `<rect x="${x}" y="270" width="${w}" height="422" fill="${c}"/><path stroke="#172a33" stroke-width=".8" d="M${x} 270v422"/>`).join('')}
    <path stroke="#172a33" stroke-width="1.500" d="M1148 265v427"/></g>

  <g stroke="#1b2d36" stroke-width="1" stroke-linejoin="round">
    <path fill="#526c79" d="M677 180v27l3 3 170 47 2-22z"/>
    <path fill="#6d8c9b" d="M852 232l-2 25 24-18z"/>
    <path fill="#536f7c" d="M604 139l504 147v20l-504-145z"/>
    <path fill="#7795a3" d="M604 139l6-1 508 144-10 4z"/>
    <path fill="#5a7683" d="M615 120l-5 14-2 5 511 143v-8L640 120z"/>
    <path fill="url(#lip)" d="M615 120h25l480 131v30L615 132z"/>
    <path fill="#4d6571" d="M640 120h60l407 118v15z"/>
    <path fill="none" d="M610 141l500 144"/>
    <path fill="url(#round)" d="M700 120h67l351 103-3 6-9 9z"/>
    <path fill="none" d="M733 120l380 109M665 120l442 127"/>
    <path fill="url(#groove)" d="M767 120h66l305 88v14l-17 16-5-10z"/>
    <path fill="none" stroke-width="2" d="M842 124l296 86"/>
    <path fill="#87afc4" d="M833 120h35l281 77-11 11z"/>
  </g>

  <g stroke="#172a33" stroke-width="1.200" stroke-linejoin="round">
    <path fill="#455d68" d="M1138 246l12 4v20l-13 10-16-5 2-28z"/>
    <path fill="#7599ab" d="M1107 238l10-9-1 6 5 4 15-10 2-20 12-11v21l-7-2 1-7-5 2-2 16v20l4 12 9-3v12l-13 11-15-4-5 6 4 5-3 11-11 8v-21l6 3 6-13v-27l-7-3v8l-5-1z"/>
    <path fill="#4a626e" d="M1141 248l7 2v6l-5 2zM1123 272l7-6 8 6-4 5z"/>
    <ellipse cx="1128" cy="252" rx="8" ry="15" fill="#8fb1c2"/>
    <ellipse cx="1129" cy="253" rx="5" ry="12" fill="#607e8d"/>
  </g>

  <path fill="#111414" d="M853 298c2-18 9-34 20-35l20 3 24-14 14 2-20 34 96 42v108l-102-26v20l-12-6v-20l-10-2v-58l-16-5-2-9-10-3z"/>
  <g stroke="#1b2d36" stroke-linejoin="round">
    <path fill="#8ab3cc" d="M927 253l106 31-1 27-129-36z"/>
    <path fill="#546f7c" d="M903 275l129 36-1 168-128-36v-28l102 31V329l-102-29z"/>
    <path fill="#86a7b0" d="M907 412l98 25v9l-102-31z"/>
  </g>
  <path fill="#0f1212" d="M903 301l102 29v102l-8 5-94-27z"/>
  <path stroke="#eee" stroke-width="1.500" d="M998 435l1-4"/>
  <path fill="#850f4b" d="M918 312l14 3v92l-14-3zM950 322l15 3-1 91-14-3z"/>
  <g font-family="Open Sans, sans-serif" font-style="italic">
    <text transform="translate(930 392) rotate(-88)" font-size="13" fill="#5d1d3f" stroke="#b295a5" stroke-width=".3">Tower Pro</text>
    <text transform="translate(948 398) rotate(-88)" font-size="20" fill="#b7bcbc">MG90S</text>
    <text transform="translate(962 405) rotate(-88)" font-size="13" fill="#5d1d3f" stroke="#b295a5" stroke-width=".3">Micro servo</text>
  </g>

  <path fill="#8fb4c9" stroke="#1b2d36" d="M822 300l40-36 14 10-24 62-16 10z"/>
  <path fill="#14191a" d="M853 285c4-14 12-22 20-22l6 66c-14 2-26-8-26-44"/>
  <path fill="none" stroke="#2c4049" stroke-width="5" stroke-dasharray="1 1" d="M862 272c-10 10-13 28-8 50"/>
  <path fill="#d9a128" d="M641 262l16-11 50 15 36-36 17 3 15 7 7 23 26-16 54 18-40 35 16 9-15 11z"/>
  <path fill="#506a76" stroke="#2c2a19" d="M757 238l19 4q6 1 6 8v13l-26-7z"/>
  <path fill="none" stroke="#e0b45a" stroke-width="1.500" d="M747 230l31 7q7 2 7 10v16M755 237l12 3-12 16"/>
  <path fill="#9ebccb" d="M808 247l54 18 7-3-47-15z"/>
  <path fill="#556258" stroke="#6d5a20" d="M659 260l26 6-3 5-26-7zM797 300l25 8-4 3-24-7z"/>
  <path fill="#587585" stroke="#1b2d36" d="M822 319l15-9 1 49-16 12z"/>
  <path fill="#85abc0" d="M825 319l11-7v46l-11 9z"/>

  <path fill="url(#red)" d="M641 263l-53 42 20 20 104 17 25 14-11 12 14 31 22 5 60-46 2-40z"/>
  <path fill="#4d0303" d="M648 269l146 48-18 18-68-15-60-24z"/>
  <path fill="#a10705" d="M648 276l100 35 10 32-46-4-54-42z"/>
  <path fill="#d30f0c" d="M770 330l29-17 22 6-2 31-59 53-12-6 24-32z"/>
  <path fill="#a40a08" d="M744 352l26-23 14 5-20 33-14 32-11-3-12-28z"/>
  <path fill="none" stroke="#3a0202" stroke-width="1.200" d="M726 365l14 32 20 6M784 335l-18 26M641 263l-53 42M752 351l32-24"/>
  <ellipse cx="752" cy="381" rx="11" ry="14" fill="#4a5557" transform="rotate(-25 752 381)"/>
  <path fill="#8d9a9c" stroke="#222" d="M747 377l8-3 5 7-5 7-7-3z"/>
  <ellipse cx="744" cy="322" rx="10" ry="5" fill="#41584f" transform="rotate(18 744 322)"/>
  <path stroke="#2c228f" stroke-width="1.500" d="M746 318v-17"/>
  ${bolt(672, 292)}${bolt(808, 331)}${bolt(761, 374)}
  <g fill="none" stroke="#efac4b" stroke-width="1.500"><path d="M641 263v28M641 263l182 56M746 292v10M708 340l114 32 16-10v-52M838 337c26-14 40-38 37-56-2-11-7-17-15-17"/></g>
  ${mate(737, 187)}${mate(833, 214)}
  <g><ellipse cx="741" cy="258" rx="4" ry="9" fill="none" stroke="#e4dfcc" stroke-width="1.500" transform="rotate(15 741 258)"/><path stroke="#1414a8" stroke-width="2" d="M728 256l9 3"/><path fill="#fff" d="M735 262h6l-2 8h-4z"/></g>
  ${[345, 403].map((y) => `<g transform="translate(1042 ${y})"><ellipse rx="4" ry="10" fill="none" stroke="#e6edf0" stroke-width="1.500" transform="rotate(15)"/><path stroke="#1414a8" stroke-width="2" d="M-11-3l9 3"/><path fill="#fff" d="M-4 2l5 2-3 6z"/><path stroke="#9a3744" stroke-width="1.500" d="M0 12v5"/></g>`).join('')}
  <circle cx="877" cy="179" r="2.500" fill="#dfe9ee" stroke="#172a33" stroke-width="1.500"/>
  <path fill="#fff" stroke="#8a2318" stroke-width=".8" d="M741 273v11l3-2 2 4 2-1-2-4h4z"/>
</svg>`;

const CUBE = `
<svg viewBox="0 0 100 84" width="100" height="84" role="img" aria-label="View cube">
  <path fill="none" stroke="#e0e8eb" stroke-width="4" d="M14 20q7-10 18-12M60 8q11 4 17 12"/>
  <g fill="#e2e4e4"><path d="M1 47l5-4v8zM92 47l-5-4v8zM41 7l4-5 4 5zM42 84l4 4 4-4z"/></g>
  <g fill="#fdfdfd" stroke="#e9eced" stroke-width="3" stroke-linejoin="round"><path d="M24 36l16-13q14-1 28 5l-14 13q-15 2-30-5z"/><path d="M23 38l30 6v27l-28-9q-3-10-2-24z"/><path d="M54 44l14-14v26L53 71z"/></g>
  <path stroke="#7a73b8" d="M70 32v27"/><path stroke="#a9b99a" d="M70 59L50 75"/><path stroke="#999" stroke-width=".7" d="M35 50l35 10"/>
  <g font-family="Roboto, sans-serif" font-size="8" fill="#555"><text x="68" y="26" fill="#3c386f">Z</text><text x="46" y="82" font-size="7" fill="#7b9a54">Y</text>
  <text transform="translate(28 56) rotate(8)" font-size="7">Back</text><text transform="translate(58 56) rotate(-40)" font-size="6">Left</text><text transform="translate(50 32) rotate(195)" font-size="6">Top</text></g>
</svg>`;

define('model-view', `
  :host { display: block; flex: 1; min-width: 0; position: relative; overflow: hidden; background: #fefefc; }
  .model { position: absolute; inset: 0; }
  .model svg { width: 100%; height: 100%; display: block; }
  .cube { position: absolute; right: 0; top: 8px; }
  .cube > svg { display: block; overflow: visible; }
  .shade { display: flex; align-items: center; gap: 3px; margin-left: 67px; color: #222; }
  .dock { position: absolute; right: 0; top: 230px; width: 20px; border: 1px solid #ddd; border-right: 0; background: #fff; color: #333; }
  .dock button { display: flex; width: 100%; height: 20px; align-items: center; justify-content: flex-end; padding-right: 3px; border-bottom: 1px solid #e4e4e4; }
  .pop { position: absolute; left: 0; top: 270px; width: 20px; height: 21px; display: flex; align-items: center; justify-content: center; border: 1px solid #ddd; border-left: 0; background: #fff; color: #444; }
  .area { position: absolute; right: 6px; bottom: 2px; display: flex; align-items: center; gap: 11px; color: #555; }
  .area span { margin-right: 1px; }
  .area x-icon { color: #333; }
  .area b { font-family: "DejaVu Sans Mono", monospace; font-size: 7px; }
  sup { font-size: 6px; line-height: 6px; }
`, `
  <div class="model">${MODEL}</div>
  <div class="cube">${CUBE}<button class="shade" aria-label="Display style">${icon('cube', 12)}${icon('caret', 6)}</button></div>
  <div class="dock">${['sheet', 'cubes', 'links', 'plate', 'varx'].map((n) => iconBtn(n, n, 12)).join('')}</div>
  <button class="pop" aria-label="Outline">${icon('outline', 12)}</button>
  <div class="area"><span>Area: <b>426.255</b> mm<sup>2</sup></span>${icon('hand', 11)}${icon('scale', 11)}</div>
`);

// ── Document tabs ────────────────────────────────────────────────────────

define('doc-tab', `
  :host { display: flex; align-items: center; gap: 2px; flex: 0 1 124px; min-width: 0; padding: 0 2px 0 6px; background: #ebebeb; border-left: 1px solid #cfcfcf; color: #555; font-size: 9px; white-space: nowrap; }
  :host([active]) { background: #fff; border-bottom: 2px solid #173f7d; padding-left: 5px; }
  span { overflow: hidden; }
  b { margin-left: auto; width: 13px; height: 14px; background: #41d69a; color: #fff; font-weight: 400; font-size: 8px; line-height: 14px; text-align: center; }
`, '<x-icon></x-icon><span><slot></slot></span>', function (root) {
  const i = root.querySelector('x-icon');
  i.setAttribute('name', this.getAttribute('icon'));
  i.style.setProperty('--size', '12px');
  i.connectedCallback();
  if (this.hasAttribute('active')) {
    const b = document.createElement('b');
    b.textContent = 'Ò';
    root.append(b);
  }
});

define('side-rail', `
  :host { display: flex; flex-direction: column; align-items: center; flex: none; width: 24px; background: #f9f9fa; color: #222; padding: 5px 0 2px; }
  button { display: flex; margin-bottom: 10px; }
  button:last-child { margin: auto 0 0; }
`, [['tree', 'Tree'], ['addb', 'Versions'], ['chat', 'Comments'], ['watch', 'Timer'], ['find', 'Search tabs']].map(([n, l]) => iconBtn(n, l, 12)).join(''));

define('cad-workspace', `
  :host { display: flex; flex: 1; background: #fff; }
  .main { flex: 1; min-width: 0; display: flex; flex-direction: column; border-left: 1px solid #ddd; }
  .body { flex: 1; display: flex; min-height: 400px; }
  .tabs { display: flex; height: 18px; background: #cbcbcb; }
  .tabs > button { width: 24px; display: flex; align-items: center; justify-content: center; color: #444; }
`, `
  <side-rail></side-rail>
  <div class="main">
    <tool-bar></tool-bar>
    <div class="body"><instance-panel></instance-panel><model-view></model-view></div>
    <nav class="tabs">${iconBtn('plus', 'Add tab', 12)}
      <doc-tab icon="asm" active>Ensamblatge superi...</doc-tab><doc-tab icon="tab">Part Studio 1</doc-tab>
      <doc-tab icon="tab">Suport top frame</doc-tab><doc-tab icon="tab">Suport servo - Left side</doc-tab>
      <doc-tab icon="tab">Braç suport</doc-tab><doc-tab icon="varx">Arm_length</doc-tab>
      <doc-tab icon="tab">1515 Aluminum Extrusi...</doc-tab><doc-tab icon="tab">Mà</doc-tab>
      <doc-tab icon="folder">Importaciones CAD</doc-tab></nav>
  </div>
`);

define('play-button', `
  :host { position: absolute; inset: 0; margin: auto; width: 146px; height: 146px; }
  button { display: block; width: 100%; height: 100%; border-radius: 50%; border: 10px solid #fff; background: #54a3ea; box-shadow: 0 3px 14px rgba(0,0,0,.35); cursor: pointer; }
  svg { display: block; width: 100%; height: 100%; }
`, `<button aria-label="Play"><svg viewBox="0 0 126 126"><path fill="#fff" stroke="#fff" stroke-width="7" stroke-linejoin="round" d="M46 32v60l45-30z"/></svg></button>`);
</script>
</body>
</html>
